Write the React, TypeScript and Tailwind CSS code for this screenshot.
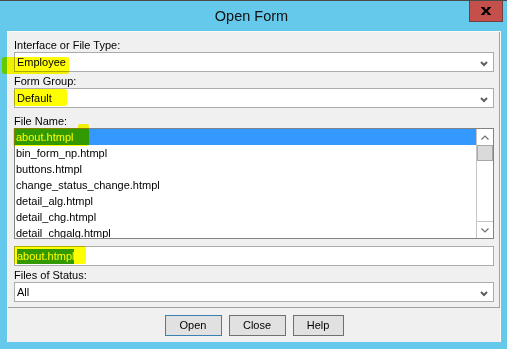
import React from "react";

function ComboChevron() {
  return (
    <svg width="8" height="6" viewBox="0 0 8 6" className="mt-[3px]">
      <polyline points="1,1 4,4 7,1" fill="none" stroke="#5f5f5f" strokeWidth="2" />
    </svg>
  );
}

function Label({ children, className = "" }: { children: React.ReactNode; className?: string }) {
  return <div className={`h-[13px] leading-[13px] pl-0 ${className}`}>{children}</div>;
}

function Combo({ value, className = "" }: { value: string; className?: string }) {
  return (
    <div
      className={`h-[20px] bg-white border border-[#acacac] flex items-center justify-between pl-[2px] pr-[5px] ${className}`}
    >
      <span className="leading-[14px]">{value}</span>
      <ComboChevron />
    </div>
  );
}

const files = [
  "about.htmpl",
  "bin_form_np.htmpl",
  "buttons.htmpl",
  "change_status_change.htmpl",
  "detail_alg.htmpl",
  "detail_chg.htmpl",
  "detail_chgalg.htmpl",
];

function Hl({ className }: { className: string }) {
  return <div className={`absolute pointer-events-none bg-[#ffff00] mix-blend-multiply ${className}`} />;
}

export default function App() {
  return (
    <div className="relative w-[507px] h-[349px] overflow-hidden bg-[#65c9eb] font-['Liberation_Sans',Arial,sans-serif] text-[11px] text-black">
      {/* title bar */}
      <div className="h-[31px] border-t border-[#4a4a4a] flex">
        <div className="flex-1" />
        <div className="flex items-center pt-px text-[14.5px] text-[#111]">Open Form</div>
        <div className="flex-1 flex justify-end pr-[4px]">
          <div className="w-[34px] h-[21px] bg-[#c5504b] border-x border-b border-[#70403c] flex items-center justify-center">
            <svg width="10" height="8" viewBox="0 0 10 8">
              <path d="M1.5 0.8 L8.5 7.2 M8.5 0.8 L1.5 7.2" stroke="#000" strokeWidth="2.2" fill="none" />
              <path d="M0 0.5 H3.5 M6.5 0.5 H10 M0 7.5 H3.5 M6.5 7.5 H10" stroke="#000" strokeWidth="1" fill="none" />
            </svg>
          </div>
        </div>
      </div>

      {/* client */}
      <div className="ml-[7px] w-[494px] h-[311px] bg-[#f0f0f0] border-l border-t border-r border-[#fafafa] flex flex-col">
        <div className="h-[276px] border-r border-b border-[#a0a0a0] pt-[7px] pl-[6px] pr-[5px] flex flex-col">
          <Label>Interface or File Type:</Label>
          <Combo value="Employee" />
          <Label className="mt-[3px]">Form Group:</Label>
          <Combo value="Default" />
          <Label className="mt-[7px]">File Name:</Label>
          <div className="h-[111px] bg-white border border-[#828282] flex overflow-hidden">
            <div className="flex-1 flex flex-col">
              {files.map((f, i) => (
                <div
                  key={f}
                  className={`h-[16px] shrink-0 leading-[16px] pl-px ${i === 0 ? "bg-[#3399ff] text-white" : ""}`}
                >
                  {f}
                </div>
              ))}
            </div>
            <div className="w-[17px] border-l border-[#c4c4c4] flex flex-col bg-white">
              <div className="h-[16px] shrink-0 flex items-center justify-center">
                <svg width="8" height="5" viewBox="0 0 8 5">
                  <polyline points="0.5,4.5 4,1 7.5,4.5" fill="none" stroke="#707070" strokeWidth="1.2" />
                </svg>
              </div>
              <div className="h-[16px] shrink-0 bg-[#dadada] border border-[#a8a8a8]" />
              <div className="flex-1" />
              <div className="h-[17px] shrink-0 border-t border-[#c4c4c4] flex items-center justify-center">
                <svg width="8" height="5" viewBox="0 0 8 5">
                  <polyline points="0.5,0.5 4,4 7.5,0.5" fill="none" stroke="#707070" strokeWidth="1.2" />
                </svg>
              </div>
            </div>
          </div>
          <div className="mt-[7px] h-[20px] bg-white border border-[#acacac] flex items-center pl-[2px]">
            <span className="bg-[#3399ff] text-white leading-[15px]">about.htmpl</span>
          </div>
          <Label className="mt-[3px]">Files of Status:</Label>
          <Combo value="All" />
        </div>
        <div className="flex-1 flex justify-center gap-[7px] pt-[7px]">
          <button className="w-[57px] h-[21px] bg-[#e1e1e1] border border-[#3c7fb1] leading-[19px] text-center">
            Open
          </button>
          <button className="w-[57px] h-[21px] bg-[#e1e1e1] border border-[#707070] leading-[19px] text-center">
            Close
          </button>
          <button className="w-[51px] h-[21px] bg-[#e1e1e1] border border-[#707070] leading-[19px] text-center">
            Help
          </button>
        </div>
      </div>

      {/* yellow marker annotations */}
      <Hl className="left-[2px] top-[57px] w-[67px] h-[17px] rounded-[2px]" />
      <Hl className="left-[14px] top-[89px] w-[53px] h-[17px] rounded-[2px]" />
      <Hl className="left-[13px] top-[128px] w-[76px] h-[18px] rounded-[2px]" />
      <Hl className="left-[78px] top-[124px] w-[11px] h-[5px] rounded-[2px]" />
      <Hl className="left-[14px] top-[246px] w-[72px] h-[18px] rounded-[2px]" />
    </div>
  );
}
